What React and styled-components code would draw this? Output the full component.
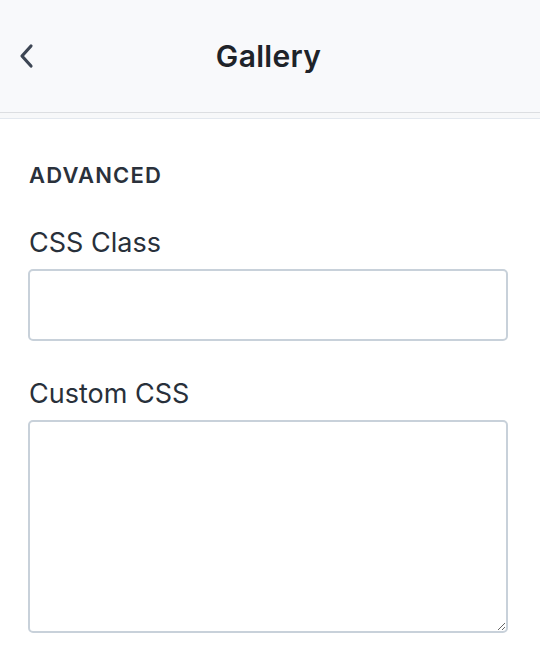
import styled, { createGlobalStyle } from "styled-components";

const GlobalStyle = createGlobalStyle`
  html, body {
    margin: 0;
    padding: 0;
    background: #ffffff;
    font-family: Inter, "Liberation Sans", Arial, sans-serif;
  }
  * {
    box-sizing: border-box;
  }
`;

const Page = styled.div`
  width: 540px;
  min-height: 670px;
  background: #ffffff;
`;

const Header = styled.header`
  height: 113px;
  background: #f8f9fb;
  border-bottom: 1px solid #dcdee1;
  display: grid;
  grid-template-columns: 60px 1fr 60px;
  align-items: center;
`;

const Divider = styled.div`
  height: 6px;
  background: #f7f8f9;
  border-bottom: 1px solid #e3e8ee;
`;

const BackButton = styled.button`
  background: none;
  border: 0;
  padding: 0 0 0 17px;
  height: 40px;
  display: flex;
  align-items: center;
  cursor: pointer;
`;

const Title = styled.h1`
  margin: 0 0 0 -3px;
  text-align: center;
  font-size: 30px;
  line-height: 34px;
  font-weight: 600;
  letter-spacing: 0.3px;
  color: #1e2329;
`;

const Content = styled.main`
  padding: 44px 32px 0 28px;
  display: flex;
  flex-direction: column;
`;

const SectionTitle = styled.h2`
  margin: 0 0 0 1px;
  font-size: 22px;
  line-height: 24px;
  font-weight: 600;
  letter-spacing: 1.2px;
  color: #2a313b;
  text-transform: uppercase;
`;

const Field = styled.label`
  display: flex;
  flex-direction: column;
  gap: 10px;
  margin-top: ${(p) => p.$top}px;
`;

const Label = styled.span`
  font-size: 27px;
  line-height: 32px;
  color: #28303a;
  padding-left: 1px;
`;

const TextInput = styled.input`
  width: 480px;
  height: 72px;
  border: 2px solid #c8d1da;
  border-radius: 5px;
  background: #ffffff;
  font: inherit;
  font-size: 20px;
  padding: 0 12px;
  outline: none;
`;

const TextArea = styled.textarea`
  width: 480px;
  height: 213px;
  border: 2px solid #c8d1da;
  border-radius: 5px;
  background: #ffffff;
  font: inherit;
  font-size: 20px;
  padding: 12px;
  outline: none;
  resize: vertical;
`;

const App = () => {
  return (
    <>
      <GlobalStyle />
      <Page>
        <Header>
          <BackButton aria-label="Back">
            <svg width="18" height="26" viewBox="0 0 18 26" fill="none">
              <path
                d="M14 3 L5 13 L14 23"
                stroke="#3d4654"
                strokeWidth="3.2"
                strokeLinecap="round"
                strokeLinejoin="round"
              />
            </svg>
          </BackButton>
          <Title>Gallery</Title>
          <span />
        </Header>
        <Divider />
        <Content>
          <SectionTitle>Advanced</SectionTitle>
          <Field $top={40}>
            <Label>CSS Class</Label>
            <TextInput type="text" />
          </Field>
          <Field $top={37}>
            <Label>Custom CSS</Label>
            <TextArea />
          </Field>
        </Content>
      </Page>
    </>
  );
};

export default App;
